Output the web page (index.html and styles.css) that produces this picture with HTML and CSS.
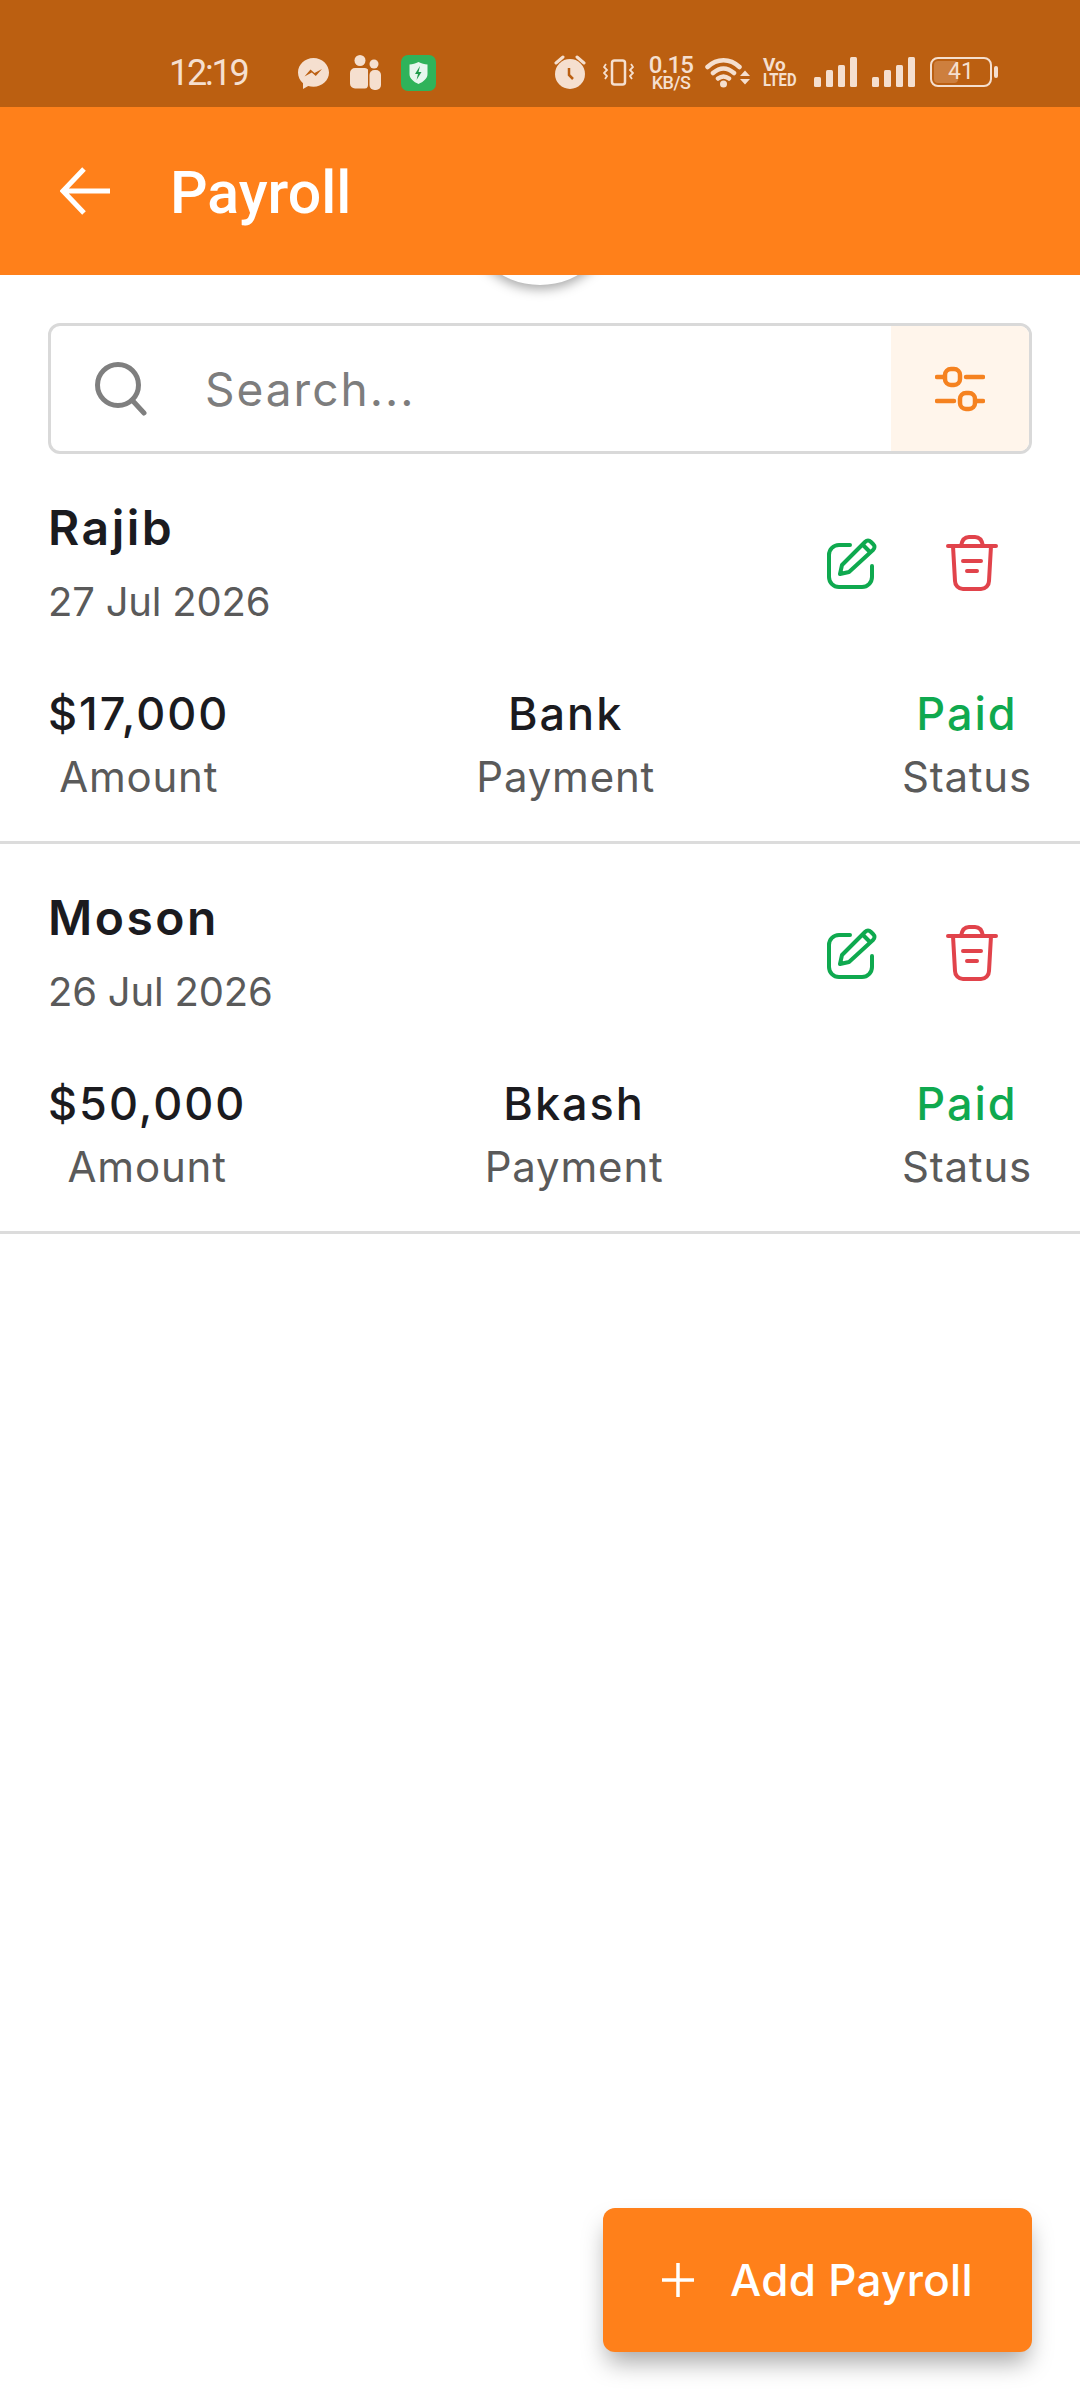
FILE: index.html
```html
<!DOCTYPE html>
<html>
<head lang="en">
    <meta charset="UTF-8">
    <title>Payroll</title>
    <link rel="stylesheet" href="styles.css">
</head>
<body>
<div id="screen">
    <div id="statusbar">
        <span class="time">12:19</span>
        <svg class="ic-messenger" width="31" height="31" viewBox="0 0 31 31">
            <path d="M15.500 0C6.900 0 0 6.400 0 14.600c0 4.300 1.900 8 5 10.600V31l5.200-3c1.600.500 3.400.800 5.300.800 8.600 0 15.500-6.200 15.500-14.200S24.100 0 15.500 0z" fill="#f5dfcf"/>
            <path d="M6.500 18.500l6-7 4 3.500 7.500-4-6.200 7-4-3.500z" fill="#bb5f11"/>
        </svg>
        <svg class="ic-people" width="31" height="35" viewBox="0 0 31 35">
            <circle cx="10" cy="5.500" r="5.500" fill="#f5dfcf"/>
            <circle cx="24" cy="9" r="4.500" fill="#f5dfcf"/>
            <path d="M5 13h10a4 4 0 0 1 3 1.500V30a4 4 0 0 1-1 2.800c-.7.700-1.500.7-2.500.7H5a5 5 0 0 1-5-5V18a5 5 0 0 1 5-5z" fill="#f5dfcf"/>
            <rect x="19.500" y="15" width="11.500" height="20" rx="5" fill="#f5dfcf"/>
        </svg>
        <svg class="ic-shield" width="35" height="36" viewBox="0 0 35 36">
            <rect width="35" height="36" rx="7" fill="#2fb35a"/>
            <path d="M17.500 7c3 1.500 6 2.200 9 2.400v9.600c0 4.500-4 7.800-9 10-5-2.200-9-5.500-9-10V9.400c3-.2 6-.9 9-2.400z" fill="#e6f7ee"/>
            <path d="M19 11l-5 8h3l-1.500 6 5-8h-3z" fill="#1f9a4a"/>
        </svg>
        <div class="sys">
            <svg class="ic-alarm" width="32" height="34" viewBox="0 0 32 34">
                <circle cx="16" cy="19" r="15" fill="#f5dfcf"/>
                <path d="M2 8l7-6M30 8l-7-6" stroke="#f5dfcf" stroke-width="3" stroke-linecap="round"/>
                <path d="M15 13v7l4 4" stroke="#bb5f11" stroke-width="2.500" fill="none"/>
            </svg>
            <svg class="ic-vibrate" width="31" height="27" viewBox="0 0 31 27" fill="none" stroke="#f5dfcf">
                <rect x="9" y="1.500" width="13" height="24" rx="2.500" stroke-width="2.500"/>
                <path d="M3 5l-2 3 3 3-3 3 3 3-2 3M28 5l2 3-3 3 3 3-3 3 2 3" stroke-width="1.800"/>
            </svg>
            <div class="speed">
                <span class="speed-num">0.15</span>
                <span class="speed-unit">KB/S</span>
            </div>
            <svg class="ic-wifi" width="45" height="31" viewBox="0 0 45 31">
                <path d="M2.500 10C12 1 25 1 34.500 10M8 16c7-6 14-6 21 0M13 21.500c4-3 7-3 11 0" fill="none" stroke="#f5dfcf" stroke-width="4.500" stroke-linecap="round"/>
                <circle cx="18.500" cy="27" r="3.500" fill="#f5dfcf"/>
                <path d="M35 19l5-5.500 5 5.500zM35 22h10l-5 5.500z" fill="#f5dfcf"/>
            </svg>
            <div class="volte">
                <span>Vo</span>
                <span class="lte">LTED</span>
            </div>
            <svg class="ic-signal" width="43" height="30" viewBox="0 0 43 30" fill="#f5dfcf">
                <rect x="0" y="20" width="7" height="10" rx="1.500"/>
                <rect x="12" y="13" width="7" height="17" rx="1.500"/>
                <rect x="24" y="8" width="7" height="22" rx="1.500"/>
                <rect x="36" y="0" width="7" height="30" rx="1.500"/>
            </svg>
            <svg class="ic-signal" width="43" height="30" viewBox="0 0 43 30" fill="#f5dfcf">
                <rect x="0" y="20" width="7" height="10" rx="1.500"/>
                <rect x="12" y="13" width="7" height="17" rx="1.500"/>
                <rect x="24" y="8" width="7" height="22" rx="1.500"/>
                <rect x="36" y="0" width="7" height="30" rx="1.500"/>
            </svg>
            <div class="battery">
                <div class="battery-level"></div>
                <span>41</span>
            </div>
        </div>
    </div>

    <div id="appbar">
        <svg class="back" width="50" height="48" viewBox="0 0 50 48" fill="none" stroke="#fff" stroke-width="5">
            <path d="M50 24H4M24 2L3 24l21 22"/>
        </svg>
        <h1>Payroll</h1>
    </div>

    <div id="content">
        <div class="peek"></div>

        <div class="search">
            <svg class="search-icon" width="52" height="54" viewBox="0 0 52 54" fill="none" stroke="#7f7f7f" stroke-width="5">
                <circle cx="23" cy="23" r="20.500"/>
                <path d="M37 38l12 13" stroke-linecap="round"/>
            </svg>
            <span class="search-text">Search...</span>
            <div class="filter">
                <svg width="50" height="46" viewBox="0 0 50 46" fill="none" stroke="#f58220" stroke-width="4.500" stroke-linecap="round">
                    <path d="M2 11h7M31 11h17M2 35h17M41 35h7"/>
                    <rect x="10" y="3" width="15" height="16" rx="6"/>
                    <rect x="25" y="27" width="15" height="16" rx="6"/>
                </svg>
            </div>
        </div>

        <div class="card">
            <div class="card-head">
                <div>
                    <div class="name">Rajib</div>
                    <div class="date">27 Jul 2026</div>
                </div>
                <div class="actions">
                    <svg width="54" height="54" viewBox="0 0 54 54" fill="none" stroke="#0fa94f" stroke-width="4">
                        <path d="M25 9H14A10 10 0 0 0 4 19v22a10 10 0 0 0 10 10h23a10 10 0 0 0 10-10v-11" stroke-linecap="round"/>
                        <path d="M15 38l2-9L40 6c2-2 4-2 6 0l2 2c2 2 2 4 0 6L24 36z" stroke-linejoin="round"/>
                        <path d="M38 9l7 7"/>
                    </svg>
                    <svg width="54" height="58" viewBox="0 0 54 58" fill="none" stroke="#e1434b" stroke-width="4" stroke-linecap="round">
                        <path d="M3 12h48M8 12l2 35a8 8 0 0 0 8 8h18a8 8 0 0 0 8-8l2-35"/>
                        <path d="M16 12c1-6 4-9 8-9h6c4 0 7 3 8 9"/>
                        <path d="M18 27h18M22 37h10"/>
                    </svg>
                </div>
            </div>
            <div class="stats">
                <div class="stat">
                    <div class="val">$17,000</div>
                    <div class="lbl">Amount</div>
                </div>
                <div class="stat">
                    <div class="val">Bank</div>
                    <div class="lbl">Payment</div>
                </div>
                <div class="stat">
                    <div class="val paid">Paid</div>
                    <div class="lbl">Status</div>
                </div>
            </div>
        </div>

        <div class="card">
            <div class="card-head">
                <div>
                    <div class="name">Moson</div>
                    <div class="date">26 Jul 2026</div>
                </div>
                <div class="actions">
                    <svg width="54" height="54" viewBox="0 0 54 54" fill="none" stroke="#0fa94f" stroke-width="4">
                        <path d="M25 9H14A10 10 0 0 0 4 19v22a10 10 0 0 0 10 10h23a10 10 0 0 0 10-10v-11" stroke-linecap="round"/>
                        <path d="M15 38l2-9L40 6c2-2 4-2 6 0l2 2c2 2 2 4 0 6L24 36z" stroke-linejoin="round"/>
                        <path d="M38 9l7 7"/>
                    </svg>
                    <svg width="54" height="58" viewBox="0 0 54 58" fill="none" stroke="#e1434b" stroke-width="4" stroke-linecap="round">
                        <path d="M3 12h48M8 12l2 35a8 8 0 0 0 8 8h18a8 8 0 0 0 8-8l2-35"/>
                        <path d="M16 12c1-6 4-9 8-9h6c4 0 7 3 8 9"/>
                        <path d="M18 27h18M22 37h10"/>
                    </svg>
                </div>
            </div>
            <div class="stats">
                <div class="stat">
                    <div class="val">$50,000</div>
                    <div class="lbl">Amount</div>
                </div>
                <div class="stat">
                    <div class="val">Bkash</div>
                    <div class="lbl">Payment</div>
                </div>
                <div class="stat">
                    <div class="val paid">Paid</div>
                    <div class="lbl">Status</div>
                </div>
            </div>
        </div>

        <div class="fab">
            <svg width="32" height="34" viewBox="0 0 32 34" fill="none" stroke="#fff" stroke-width="3.500">
                <path d="M0 17h32M16 0v34"/>
            </svg>
            <span>Add Payroll</span>
        </div>
    </div>
</div>
</body>
</html>
```

FILE: styles.css
```css
* {
    margin: 0;
    padding: 0;
    box-sizing: border-box;
}

body {
    font-family: "Inter", "Liberation Sans", sans-serif;
    background-color: #fff;
}

#screen {
    width: 1080px;
    height: 2400px;
    overflow: hidden;
    display: flex;
    flex-direction: column;
}

#statusbar {
    height: 107px;
    flex: none;
    background-color: #bb5f11;
    color: #f5dfcf;
    display: flex;
    align-items: flex-start;
    padding: 55px 88px 0 169px;
}

.time {
    font-family: "Roboto", sans-serif;
    font-size: 36px;
    line-height: 36px;
    letter-spacing: -2.200px;
    width: 129px;
}

.ic-messenger {
    margin-top: 3px;
    margin-right: 21px;
}

.ic-people {
    margin-right: 20px;
}

.sys {
    margin-left: auto;
    display: flex;
    align-items: center;
    height: 34px;
}

.ic-vibrate {
    margin-left: 17px;
}

.speed {
    margin-left: 15px;
    width: 44px;
    display: flex;
    flex-direction: column;
    align-items: center;
    font-family: "Roboto", sans-serif;
    font-weight: 500;
}

.speed-num {
    font-size: 24px;
    line-height: 20px;
    letter-spacing: -0.800px;
}

.speed-unit {
    font-size: 18px;
    line-height: 15px;
    letter-spacing: -0.500px;
}

.ic-wifi {
    margin-left: 12px;
}

.volte {
    margin-left: 13px;
    width: 35px;
    display: flex;
    flex-direction: column;
    font-family: "Roboto", sans-serif;
    font-weight: 700;
    font-size: 19px;
    line-height: 15px;
    white-space: nowrap;
}

.volte .lte {
    transform: scaleX(0.78);
    transform-origin: left;
}

.ic-signal {
    margin-left: 16px;
}

.ic-signal + .ic-signal {
    margin-left: 15px;
}

.battery {
    margin-left: 15px;
    width: 62px;
    height: 30px;
    border: 2.500px solid #f5dfcf;
    border-radius: 8px;
    position: relative;
    text-align: center;
    font-family: "Roboto", sans-serif;
    font-size: 23px;
    line-height: 25px;
}

.battery::after {
    content: "";
    position: absolute;
    right: -8px;
    top: 7px;
    width: 4px;
    height: 12px;
    border-radius: 2px;
    background-color: #f5dfcf;
}

.battery-level {
    position: absolute;
    left: 2px;
    top: 2px;
    bottom: 2px;
    width: 24px;
    border-radius: 4px;
    background-color: #cd7f3e;
}

.battery span {
    position: relative;
}

#appbar {
    height: 168px;
    flex: none;
    background-color: #ff801a;
    display: flex;
    align-items: center;
    padding-left: 60px;
    position: relative;
    z-index: 2;
}

.back {
    margin-right: 60px;
}

#appbar h1 {
    margin-top: 3px;
    font-family: "Roboto", sans-serif;
    font-size: 59px;
    font-weight: 500;
    color: #fff;
}

#content {
    flex: 1;
    position: relative;
    padding-top: 48px;
}

.peek {
    position: absolute;
    left: 463px;
    top: -144px;
    width: 154px;
    height: 154px;
    border-radius: 50%;
    background-color: #fff;
    box-shadow: 0 4px 12px rgba(0, 0, 0, 0.35);
}

.search {
    height: 131px;
    margin: 0 48px;
    border: 3px solid #d9d9d9;
    border-radius: 12px;
    display: flex;
    align-items: center;
    overflow: hidden;
    position: relative;
    background-color: #fff;
}

.search-icon {
    margin-left: 44px;
}

.search-text {
    flex: 1;
    margin-left: 58px;
    font-size: 46px;
    letter-spacing: 2px;
    color: #7d7d7d;
}

.filter {
    width: 138px;
    height: 100%;
    background-color: #fff5eb;
    display: flex;
    align-items: center;
    justify-content: center;
}

.card {
    height: 390px;
    padding: 44px 48px 0;
    border-bottom: 3px solid #dcdcdc;
}

.card:first-of-type {
    height: 391px;
}

.card-head {
    display: flex;
    justify-content: space-between;
    align-items: center;
}

.name {
    font-size: 48px;
    font-weight: 600;
    line-height: 60px;
    letter-spacing: 2.500px;
    color: #1b1b1f;
}

.date {
    margin-top: 14px;
    font-size: 40px;
    line-height: 60px;
    letter-spacing: -0.200px;
    color: #5a5a5a;
}

.actions {
    display: flex;
    align-items: center;
    gap: 66px;
    padding-right: 33px;
    margin-bottom: 4px;
}

.stats {
    margin-top: 54px;
    display: flex;
    justify-content: space-between;
}

.stat {
    text-align: center;
}

.val {
    font-size: 45px;
    font-weight: 500;
    line-height: 56px;
    letter-spacing: 2px;
    color: #1b1b1f;
}

.val.paid {
    color: #0fa94f;
}

.lbl {
    margin-top: 10px;
    font-size: 42px;
    line-height: 50px;
    letter-spacing: 0.800px;
    color: #5a5a5a;
}

.fab {
    position: absolute;
    right: 48px;
    bottom: 48px;
    width: 429px;
    height: 144px;
    border-radius: 12px;
    background-color: #ff801a;
    box-shadow: 0 14px 24px -4px rgba(0, 0, 0, 0.35);
    display: flex;
    align-items: center;
    padding-left: 59px;
    gap: 36px;
    color: #fff;
    font-size: 44px;
    font-weight: 500;
    letter-spacing: 0.300px;
}
```
